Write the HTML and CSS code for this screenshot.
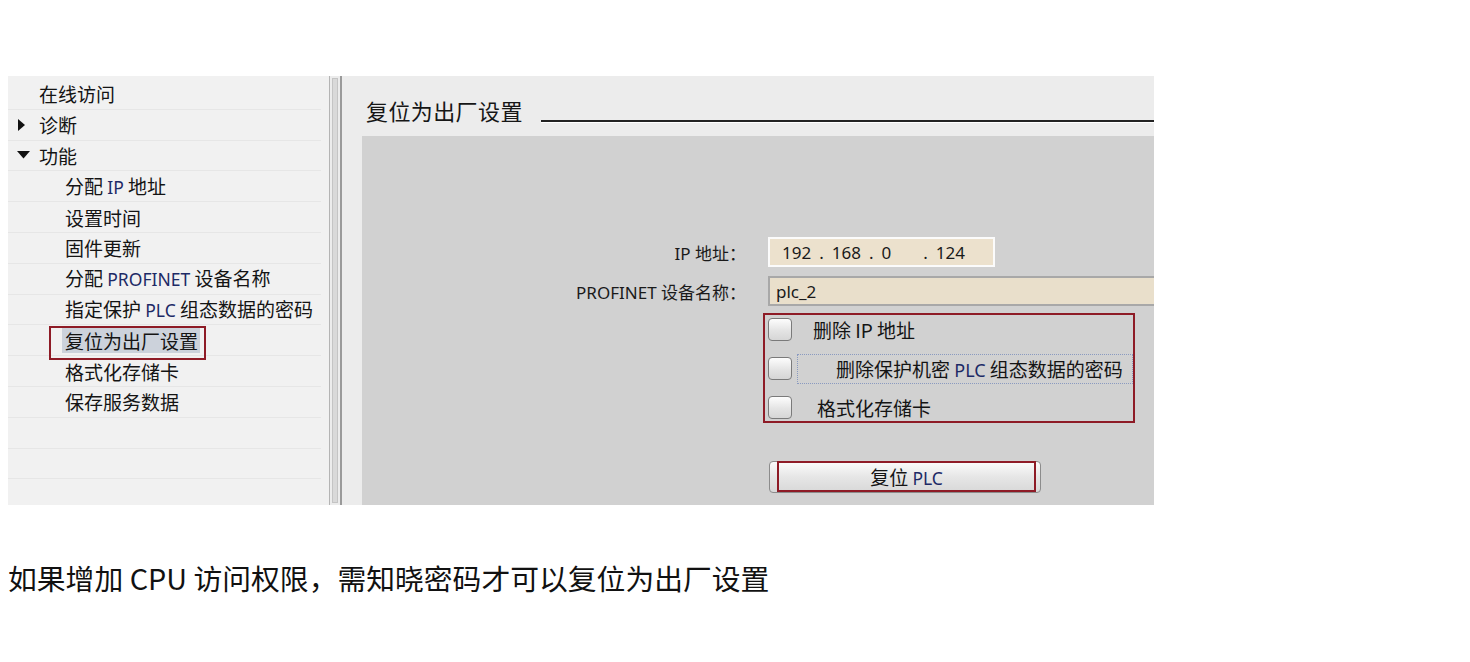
FILE: index.html
```html
<!DOCTYPE html>
<html lang="zh-CN">
<head>
<meta charset="utf-8">
<title>复位为出厂设置</title>
<link rel="stylesheet" href="styles.css">
</head>
<body>
<div class="page">
  <div class="shot">
    <div class="tree">
      <div class="row l1"><span>在线访问</span></div>
      <div class="row l1"><span class="tw"><svg width="9" height="12" viewBox="0 0 9 12"><path d="M1 0 L8 6 L1 12 Z" fill="#111"/></svg></span><span>诊断</span></div>
      <div class="row l1"><span class="tw"><svg width="13" height="8" viewBox="0 0 13 8"><path d="M0 0 L13 0 L6.5 7.5 Z" fill="#111"/></svg></span><span>功能</span></div>
      <div class="row l2"><span>分配 <span class="lat">IP</span> 地址</span></div>
      <div class="row l2"><span>设置时间</span></div>
      <div class="row l2"><span>固件更新</span></div>
      <div class="row l2"><span>分配 <span class="lat">PROFINET</span> 设备名称</span></div>
      <div class="row l2"><span>指定保护 <span class="lat">PLC</span> 组态数据的密码</span></div>
      <div class="row l2 sel"><span class="selbg">复位为出厂设置</span><span class="mark"></span></div>
      <div class="row l2"><span>格式化存储卡</span></div>
      <div class="row l2"><span>保存服务数据</span></div>
      <div class="row"></div>
      <div class="row"></div>
      <div class="row last"></div>
    </div>
    <div class="scroll"><div class="thumb"></div></div>
    <div class="main">
      <div class="titlebar">
        <div class="title">复位为出厂设置</div>
        <div class="rule"></div>
      </div>
      <div class="box">
        <div class="frow">
          <div class="lbl">IP 地址：</div>
          <div class="ipfield"><span>192</span><span>.</span><span>168</span><span>.</span><span>0</span><span class="gap"></span><span>.</span><span>124</span></div>
        </div>
        <div class="frow r2">
          <div class="lbl">PROFINET 设备名称：</div>
          <div class="namefield">plc_2</div>
        </div>
        <div class="checks">
          <div class="chk"><span class="cb"></span><span class="ct t1">删除 IP 地址</span></div>
          <div class="chk"><span class="cb"></span><span class="focus"><span class="ct t2">删除保护机密 <span class="lat">PLC</span> 组态数据的密码</span></span></div>
          <div class="chk"><span class="cb"></span><span class="ct t3">格式化存储卡</span></div>
        </div>
        <div class="btn"><span class="btnin"><span>复位 <span class="lat">PLC</span></span></span></div>
      </div>
    </div>
  </div>
  <p class="caption">如果增加 CPU 访问权限，需知晓密码才可以复位为出厂设置</p>
</div>
</body>
</html>
```

FILE: styles.css
```css
* { box-sizing: border-box; }
html, body { margin: 0; padding: 0; background: #fff; }
body {
  font-family: "Noto Sans", "Noto Sans CJK SC", sans-serif;
  color: #111;
}
.page { padding: 76px 0 0 8px; }
.shot {
  display: flex;
  width: 1146px;
  height: 429px;
}
.tree {
  width: 321px;
  background: #f1f1f1;
  padding-top: 3px;
  overflow: hidden;
}
.row {
  position: relative;
  height: 30.8px;
  display: flex;
  align-items: center;
  font-size: 19px;
  line-height: 1;
  border-bottom: 1px solid #e6e6e6;
  width: 313px;
  font-family: "Noto Sans CJK SC", sans-serif;
  color: #141414;
  white-space: nowrap;
}
.row.last { border-bottom: none; }
.l1 { padding-left: 31px; }
.l2 { padding-left: 57px; }
.tw {
  position: absolute;
  left: 9px;
  top: 0; bottom: 0;
  display: flex;
  align-items: center;
}
.lat { color: #1d2a66; font-family: "Noto Sans", sans-serif; font-size: 17.5px; }
.sel .selbg {
  background: #ccd2db;
  padding: 3px 2px 3px 3px;
  margin-left: -3px;
}
.mark {
  position: absolute;
  left: 41px;
  top: 1px;
  width: 157px;
  height: 34px;
  border: 2px solid #8e1b26;
}
.scroll {
  width: 13px;
  background: #ececec;
  border-left: 1px solid #b4b4b4;
  border-right: 2px solid #9a9a9a;
  display: flex;
  padding: 2px 2px;
}
.thumb {
  flex: 1;
  background: #d9d9d9;
  border: 1px solid #c4c4c4;
}
.main {
  flex: 1;
  background: #ececec;
  display: flex;
  flex-direction: column;
}
.titlebar {
  display: flex;
  padding: 19px 0 11px 24px;
  height: 60px;
}
.title {
  font-family: "Noto Sans CJK SC", sans-serif;
  font-size: 22px;
  line-height: 30px;
  color: #161616;
  letter-spacing: 0.4px;
}
.rule {
  flex: 1;
  align-self: flex-end;
  margin: 0 0 3px 18px;
  border-top: 2px solid #222;
  box-shadow: 0 1px 0 #fff;
  height: 0;
}
.box {
  flex: 1;
  margin-left: 20px;
  background: #d1d1d1;
  padding-top: 101px;
  display: flex;
  flex-direction: column;
}
.frow {
  display: flex;
  align-items: center;
  height: 30px;
}
.frow.r2 { margin-top: 9px; }
.lbl {
  width: 386px;
  text-align: right;
  padding-right: 2px;
  font-size: 17px;
  color: #1a1a1a;
  font-family: "Noto Sans", "Noto Sans CJK SC", sans-serif;
}
.ipfield {
  margin-left: 20px;
  width: 227px;
  height: 30px;
  background: #ece1cd;
  border: 2px solid #fbfbfb;
  display: flex;
  align-items: center;
  padding-left: 12px;
  font-size: 17px;
  gap: 8px;
  color: #1a1a1a;
}
.ipfield .gap { width: 16px; }
.namefield {
  margin-left: 20px;
  flex: 1;
  height: 30px;
  background: #e9dfcb;
  border: 2px solid #a8a8a8;
  border-right: none;
  display: flex;
  align-items: center;
  padding-left: 6px;
  font-size: 17px;
  color: #1a1a1a;
}
.checks {
  margin: 7px 0 0 401px;
  width: 372px;
  height: 110px;
  border: 2px solid #8e1b26;
  padding: 3px 0 0 3px;
  display: flex;
  flex-direction: column;
  gap: 16px;
}
.chk {
  display: flex;
  align-items: center;
  height: 23px;
  white-space: nowrap;
}
.cb {
  width: 24px;
  height: 23px;
  border: 1.5px solid #7a7a7a;
  border-radius: 4px;
  background: linear-gradient(#fdfdfd, #e4e4e4 55%, #d6d6d6);
  flex: none;
}
.ct {
  font-family: "Noto Sans CJK SC", sans-serif;
  font-size: 19px;
  color: #141414;
}
.ct .lat { font-size: 18px; }
.t1 { margin-left: 21px; }
.t3 { margin-left: 25px; }
.focus {
  margin-left: 5px;
  height: 30px;
  flex: 1;
  border: 1px dotted #8a9ac0;
  display: flex;
  align-items: center;
  padding-left: 38px;
}
.btn {
  margin: 38px 0 0 407px;
  width: 272px;
  height: 32px;
  border: 1px solid #8c8c8c;
  border-radius: 4px;
  background: linear-gradient(#fbfbfb, #e6e6e6 50%, #d8d8d8);
  padding: 0 4px 0 7px;
  display: flex;
}
.btnin {
  flex: 1;
  border: 2px solid #8e1b26;
  display: flex;
  align-items: center;
  justify-content: center;
  font-family: "Noto Sans CJK SC", sans-serif;
  font-size: 19px;
  color: #141414;
  margin-top: -1px;
  white-space: nowrap;
}
.caption {
  margin: 53px 0 0 0;
  font-family: "Noto Sans CJK SC", sans-serif;
  font-size: 28.8px;
  line-height: 40px;
  color: #111;
}
```
